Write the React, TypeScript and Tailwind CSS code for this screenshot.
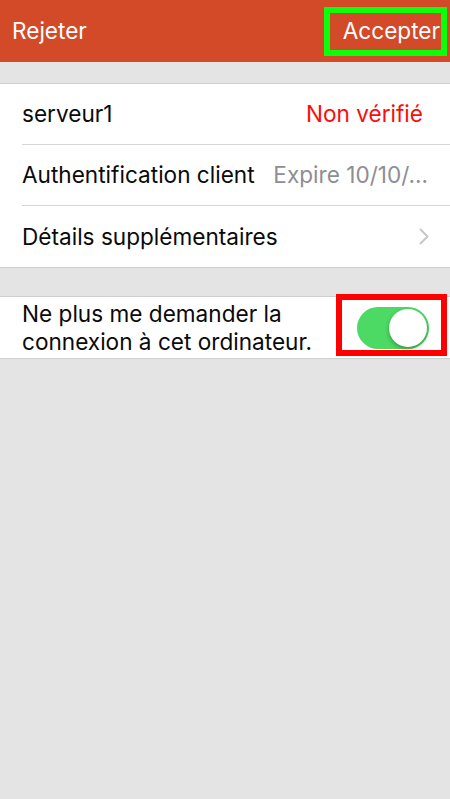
import React from "react";

const font = { fontFamily: 'Inter, "Liberation Sans", Arial, sans-serif' };

function Chevron() {
  return (
    <svg width="10" height="17" viewBox="0 0 10 17" fill="none">
      <path d="M1.5 1.5 L8.5 8.5 L1.5 15.5" stroke="#C7C7CC" strokeWidth="2" strokeLinecap="round" strokeLinejoin="round" />
    </svg>
  );
}

export default function App() {
  return (
    <div className="w-[450px] h-[799px] bg-[#E4E4E4] flex flex-col overflow-hidden" style={font}>
      <div className="h-[62px] bg-[#D24A28] flex items-center justify-between pl-[12px] pr-[3px] shrink-0">
        <span className="text-white text-[22.6px] leading-none">Rejeter</span>
        <span className="border-[6px] border-[#0BFF0B] h-[49px] w-[123px] flex items-center justify-end pr-[1px] text-white text-[22.6px] leading-none">
          Accepter
        </span>
      </div>

      <div className="h-[21px] shrink-0" />

      <div className="bg-white border-y border-[#CFCFCF] shrink-0">
        <div className="pl-[22px]">
          <div className="h-[61px] border-b border-[#D6D6D6] flex items-center justify-between pr-[27px] text-[22.6px]">
            <span className="text-[#0A0A0A]">serveur1</span>
            <span className="text-[#FF0A0A]">Non vérifié</span>
          </div>
        </div>
        <div className="pl-[22px]">
          <div className="h-[61px] border-b border-[#D6D6D6] flex items-center justify-between pr-[22px] text-[22.6px]">
            <span className="text-[#0A0A0A] whitespace-nowrap">Authentification client</span>
            <span className="text-[#8E8E93] whitespace-nowrap">Expire 10/10/...</span>
          </div>
        </div>
        <div className="pl-[22px]">
          <div className="h-[61px] flex items-center justify-between pr-[21px] text-[22.6px]">
            <span className="text-[#0A0A0A]">Détails supplémentaires</span>
            <Chevron />
          </div>
        </div>
      </div>

      <div className="h-[28px] shrink-0" />

      <div className="bg-white border-y border-[#CFCFCF] shrink-0 relative">
        <div className="h-[61px] flex items-center justify-between pl-[22px] pr-[21px]">
          <span className="text-[#0A0A0A] text-[22.6px] leading-[28px] whitespace-nowrap">
            Ne plus me demander la
            <br />
            connexion à cet ordinateur.
          </span>
          <div className="w-[72px] h-[42px] rounded-full bg-[#4CD964] relative shrink-0">
            <div className="absolute right-[2px] top-[2px] w-[38px] h-[38px] rounded-full bg-white shadow-[0_2px_4px_rgba(0,0,0,0.3)]" />
          </div>
        </div>
        <div className="absolute right-[3px] top-[-3px] w-[111px] h-[62px] border-[6px] border-[#FF0000]" />
      </div>
    </div>
  );
}
